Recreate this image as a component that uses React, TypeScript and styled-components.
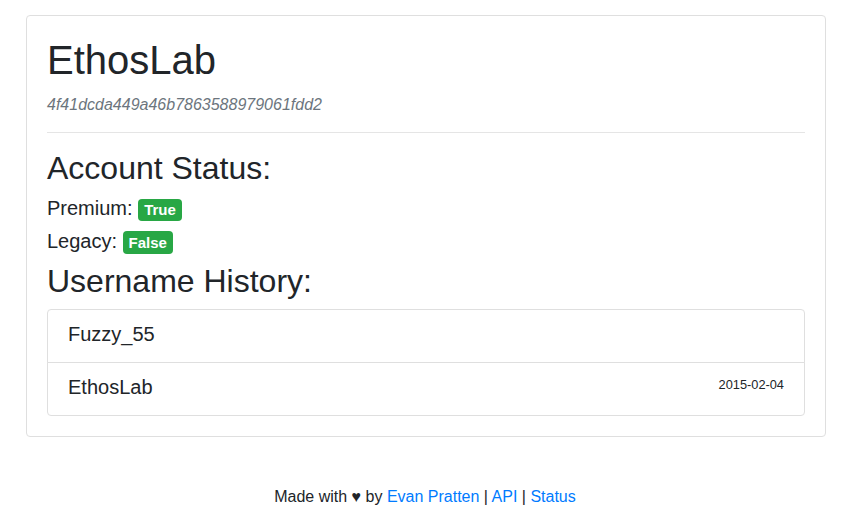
import React from "react";
import styled, { createGlobalStyle } from "styled-components";

const GlobalStyle = createGlobalStyle`
  *, *::before, *::after { box-sizing: border-box; }
  html, body { margin: 0; padding: 0; background: #fff; }
  body {
    font-family: "Liberation Sans", Arial, sans-serif;
    font-size: 16px;
    line-height: 1.5;
    color: #212529;
  }
`;

const Page = styled.div`
  padding: 15px 0 0 26px;
`;

const Card = styled.div`
  width: 800px;
  border: 1px solid #dfdfdf;
  border-radius: 4px;
  background: #fff;
`;

const CardBody = styled.div`
  padding: 20px;
`;

const Title = styled.h1`
  margin: 0 0 8px;
  font-size: 40px;
  font-weight: 500;
  line-height: 1.2;
`;

const Uuid = styled.p`
  margin: 0;
  padding-top: 1px;
  line-height: 23px;
  font-style: italic;
  color: #6c757d;
`;

const Rule = styled.hr`
  margin: 16px 0;
  border: 0;
  border-top: 1px solid rgba(0, 0, 0, 0.1);
`;

const SectionTitle = styled.h2`
  margin: 0 0 9px;
  font-size: 32px;
  font-weight: 500;
  line-height: 1.2;
`;

const StatusLine = styled.h5`
  margin: 0 0 8px;
  font-size: 20px;
  font-weight: 500;
  line-height: 1.2;
`;

const Badge = styled.span<{ $variant?: "success" | "danger" }>`
  display: inline-block;
  padding: 0.25em 0.4em;
  font-size: 75%;
  font-weight: 700;
  line-height: 1;
  text-align: center;
  white-space: nowrap;
  vertical-align: baseline;
  border-radius: 4px;
  color: #fff;
  background: ${(p) => (p.$variant === "danger" ? "#dc3545" : "#28a745")};
`;

const ListGroup = styled.div`
  display: flex;
  flex-direction: column;
`;

const ListItem = styled.div`
  padding: 12px 20px;
  border: 1px solid #dfdfdf;
  margin-bottom: -1px;
  &:first-child { border-radius: 4px 4px 0 0; }
  &:last-child { border-radius: 0 0 4px 4px; margin-bottom: 0; }
`;

const ItemRow = styled.div`
  display: flex;
  justify-content: space-between;
  width: 100%;
`;

const Name = styled.h5`
  margin: 0 0 4px;
  font-size: 20px;
  font-weight: 500;
  line-height: 1.2;
`;

const Date = styled.small`
  font-size: 80%;
  font-weight: 400;
`;

const Footer = styled.footer`
  margin-top: 48px;
  text-align: center;
`;

const Link = styled.a`
  color: #007bff;
  text-decoration: none;
`;

const history = [
  { name: "Fuzzy_55", date: "" },
  { name: "EthosLab", date: "2015-02-04" },
];

export default function App() {
  return (
    <>
      <GlobalStyle />
      <Page>
        <Card>
          <CardBody>
            <Title>EthosLab</Title>
            <Uuid>4f41dcda449a46b7863588979061fdd2</Uuid>
            <Rule />
            <SectionTitle>Account Status:</SectionTitle>
            <StatusLine>
              Premium: <Badge $variant="success">True</Badge>
            </StatusLine>
            <StatusLine>
              Legacy: <Badge $variant="success">False</Badge>
            </StatusLine>
            <SectionTitle>Username History:</SectionTitle>
            <ListGroup>
              {history.map((h) => (
                <ListItem key={h.name}>
                  <ItemRow>
                    <Name>{h.name}</Name>
                    <Date>{h.date}</Date>
                  </ItemRow>
                </ListItem>
              ))}
            </ListGroup>
          </CardBody>
        </Card>
      </Page>
      <Footer>
        Made with ♥ by <Link href="#">Evan Pratten</Link> | <Link href="#">API</Link> |{" "}
        <Link href="#">Status</Link>
      </Footer>
    </>
  );
}
